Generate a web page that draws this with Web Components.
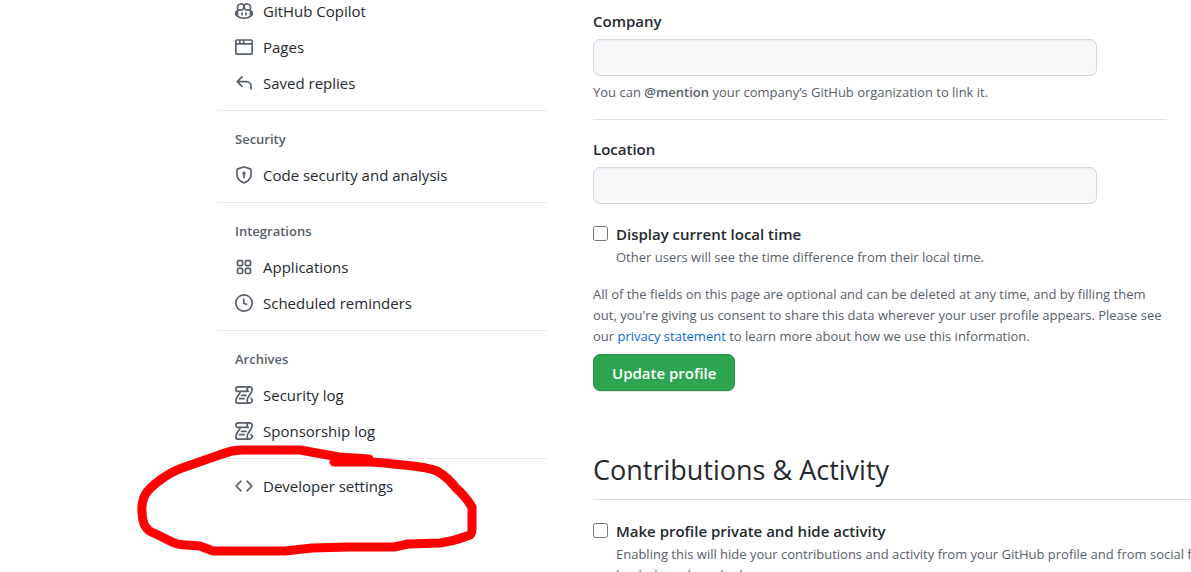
<!DOCTYPE html>
<html lang="en">
<head>
<meta charset="utf-8">
<title>Public profile</title>
<style>
html, body { margin: 0; height: 100%; overflow: hidden; }
body { background: #fff; color: #24292f; font: 15px/24px "Open Sans", "Noto Sans", sans-serif; }
</style>
</head>
<body>
<settings-page></settings-page>

<script>
const icons = {
  copilot: '<path d="M7.998 15.035c-4.562 0-7.873-2.914-7.998-3.749V9.338c.085-.628.677-1.686 1.588-2.065.013-.07.024-.143.036-.218.029-.183.06-.384.126-.612-.201-.508-.254-1.084-.254-1.656 0-.87.128-1.769.693-2.484.579-.733 1.494-1.124 2.724-1.261 1.206-.134 2.262.034 2.944.765.05.053.096.108.139.165.044-.057.094-.112.143-.165.682-.731 1.738-.899 2.944-.765 1.23.137 2.145.528 2.724 1.261.566.715.693 1.614.693 2.484 0 .572-.053 1.148-.254 1.656.066.228.098.429.126.612.012.076.024.148.037.218.924.385 1.522 1.471 1.591 2.095v1.872c0 .766-3.351 3.795-8.002 3.795Zm0-1.485c2.28 0 4.584-1.11 5.002-1.433V7.862l-.023-.116c-.49.21-1.075.291-1.727.291-1.146 0-2.059-.327-2.71-.991A3.222 3.222 0 0 1 8 6.303a3.24 3.24 0 0 1-.544.743c-.65.664-1.563.991-2.71.991-.652 0-1.236-.081-1.727-.291l-.023.116v4.255c.419.323 2.722 1.433 5.002 1.433ZM6.762 2.83c-.193-.206-.637-.413-1.682-.297-1.019.113-1.479.404-1.713.7-.247.312-.369.789-.369 1.554 0 .793.129 1.171.308 1.371.162.181.519.379 1.442.379.853 0 1.339-.235 1.638-.54.315-.322.527-.827.617-1.553.117-.935-.037-1.395-.241-1.614Zm4.155-.297c-1.044-.116-1.488.091-1.681.297-.204.219-.359.679-.242 1.614.091.726.303 1.231.618 1.553.299.305.784.54 1.638.54.922 0 1.28-.198 1.442-.379.179-.2.308-.578.308-1.371 0-.765-.123-1.242-.37-1.554-.233-.296-.693-.587-1.713-.7Z"/><path d="M6.25 9.037a.75.75 0 0 1 .75.75v1.501a.75.75 0 0 1-1.5 0V9.787a.75.75 0 0 1 .75-.75Zm4.25.75v1.501a.75.75 0 0 1-1.5 0V9.787a.75.75 0 0 1 1.5 0Z"/>',
  browser: '<path d="M0 2.75C0 1.784.784 1 1.75 1h12.5c.966 0 1.75.784 1.75 1.75v10.5A1.75 1.75 0 0 1 14.25 15H1.75A1.75 1.75 0 0 1 0 13.25ZM14.5 6h-13v7.25c0 .138.112.25.25.25h12.5a.25.25 0 0 0 .25-.25Zm-6-3.5v2h6V2.75a.25.25 0 0 0-.25-.25ZM5 2.5v2h2v-2Zm-3.25 0a.25.25 0 0 0-.25.25V4.5h2v-2Z"/>',
  reply: '<path d="M6.78 1.97a.75.75 0 0 1 0 1.06L3.81 6h6.44A4.75 4.75 0 0 1 15 10.75v2.5a.75.75 0 0 1-1.5 0v-2.5a3.25 3.25 0 0 0-3.25-3.25H3.81l2.97 2.97a.749.749 0 0 1-.326 1.275.749.749 0 0 1-.734-.215L1.47 7.28a.75.75 0 0 1 0-1.06l4.25-4.25a.75.75 0 0 1 1.06 0Z"/>',
  shield: '<path d="m8.533.133 5.25 1.68A1.75 1.75 0 0 1 15 3.48V7c0 1.566-.32 3.182-1.303 4.682-.983 1.498-2.585 2.813-5.032 3.855a1.697 1.697 0 0 1-1.33 0c-2.447-1.042-4.049-2.357-5.032-3.855C1.32 10.182 1 8.566 1 7V3.48a1.755 1.755 0 0 1 1.217-1.667l5.25-1.68a1.748 1.748 0 0 1 1.066 0Zm-.61 1.429.001.001-5.25 1.68a.251.251 0 0 0-.174.237V7c0 1.36.275 2.666 1.057 3.859.784 1.194 2.121 2.342 4.366 3.298a.196.196 0 0 0 .154 0c2.245-.957 3.582-2.103 4.366-3.297C13.225 9.666 13.5 8.358 13.5 7V3.48a.25.25 0 0 0-.174-.238l-5.25-1.68a.25.25 0 0 0-.153 0ZM9.5 6.5c0 .536-.286 1.032-.75 1.3v2.45a.75.75 0 0 1-1.5 0V7.8A1.5 1.5 0 1 1 9.5 6.5Z"/>',
  apps: '<path d="M1.5 3.25c0-.966.784-1.75 1.75-1.75h2.5c.966 0 1.75.784 1.75 1.75v2.5A1.75 1.75 0 0 1 5.75 7.5h-2.5A1.75 1.75 0 0 1 1.5 5.75ZM3.25 3a.25.25 0 0 0-.25.25v2.5c0 .138.112.25.25.25h2.5A.25.25 0 0 0 6 5.75v-2.5A.25.25 0 0 0 5.75 3ZM8.5 3.25c0-.966.784-1.75 1.75-1.75h2.5c.966 0 1.75.784 1.75 1.75v2.5a1.75 1.75 0 0 1-1.75 1.75h-2.5A1.75 1.75 0 0 1 8.500 5.75Zm1.75-.25a.25.25 0 0 0-.25.25v2.5c0 .138.112.25.25.25h2.5a.25.25 0 0 0 .25-.25v-2.5a.25.25 0 0 0-.25-.25ZM1.500 10.250c0-.966.784-1.75 1.750-1.750h2.500c.966 0 1.750.784 1.750 1.750v2.500a1.750 1.750 0 0 1-1.750 1.750h-2.500a1.750 1.750 0 0 1-1.750-1.750ZM3.250 10a.25.25 0 0 0-.25.25v2.500c0 .138.112.25.25.25h2.500a.25.25 0 0 0 .25-.25v-2.500a.25.25 0 0 0-.25-.25ZM8.500 10.250c0-.966.784-1.750 1.750-1.750h2.500c.966 0 1.750.784 1.750 1.750v2.500a1.750 1.750 0 0 1-1.750 1.750h-2.500a1.750 1.750 0 0 1-1.750-1.750Zm1.750-.25a.25.25 0 0 0-.25.25v2.500c0 .138.112.25.25.25h2.500a.25.25 0 0 0 .25-.25v-2.500a.25.25 0 0 0-.25-.25Z"/>',
  clock: '<path d="M8 0a8 8 0 1 1 0 16A8 8 0 0 1 8 0ZM1.5 8a6.5 6.5 0 1 0 13 0 6.5 6.5 0 0 0-13 0Zm7-3.25v2.992l2.028.812a.75.75 0 0 1-.557 1.392l-2.500-1A.751.751 0 0 1 7 8.250v-3.500a.75.75 0 0 1 1.500 0Z"/>',
  log: '<path d="M5 8.250a.75.75 0 0 1 .75-.75h4a.75.75 0 0 1 0 1.500h-4A.75.75 0 0 1 5 8.250ZM4 10.500A.75.75 0 0 0 4 12h4a.75.75 0 0 0 0-1.500H4Z"/><path d="M13-.005c1.654 0 3 1.328 3 3 0 .982-.338 1.933-.783 2.818-.443.879-1.028 1.758-1.582 2.588l-.011.017c-.568.853-1.104 1.659-1.501 2.446-.398.789-.623 1.494-.623 2.136a1.500 1.500 0 1 0 2.333-1.248.75.75 0 0 1 .834-1.246A3 3 0 0 1 13 16H3a3 3 0 0 1-3-3c0-1.582.891-3.135 1.777-4.506.209-.322.418-.637.623-.946.473-.709.923-1.386 1.287-2.048H2.510c-.576 0-1.381-.133-1.907-.783A2.680 2.680 0 0 1 0 2.995a3 3 0 0 1 3-3Zm0 1.500a1.500 1.500 0 0 0-1.500 1.500c0 .476.223.834.667 1.132A.75.75 0 0 1 11.750 5.500H5.368c-.467 1.003-1.141 2.015-1.773 2.963-.192.289-.381.571-.558.845C2.130 10.711 1.500 11.916 1.500 13A1.500 1.500 0 0 0 3 14.500h7.401A2.989 2.989 0 0 1 10 13c0-.979.338-1.928.784-2.812.441-.874 1.023-1.748 1.575-2.576l.017-.026c.568-.853 1.103-1.658 1.501-2.448.398-.79.623-1.497.623-2.143 0-.838-.669-1.500-1.500-1.500Zm-10 0a1.500 1.500 0 0 0-1.500 1.500c0 .321.100.569.270.778.097.120.325.227.740.227h7.674A2.737 2.737 0 0 1 10 2.995c0-.546.146-1.059.401-1.500Z"/>',
  code: '<path d="m11.280 3.220 4.250 4.250a.75.75 0 0 1 0 1.060l-4.250 4.250a.749.749 0 0 1-1.275-.326.749.749 0 0 1 .215-.734L13.940 8l-3.720-3.720a.749.749 0 0 1 .326-1.275.749.749 0 0 1 .734.215Zm-6.560 0a.751.751 0 0 1 1.042.018.751.751 0 0 1 .018 1.042L2.060 8l3.720 3.720a.749.749 0 0 1-.326 1.275.749.749 0 0 1-.734-.215L.470 8.530a.75.75 0 0 1 0-1.060Z"/>'
};

function define(name, html, setup) {
  customElements.define(name, class extends HTMLElement {
    constructor() {
      super();
      const template = document.createElement('template');
      template.innerHTML = html;
      this.attachShadow({ mode: 'open' }).append(template.content.cloneNode(true));
    }
    connectedCallback() {
      if (setup) setup(this, this.shadowRoot);
    }
  });
}

define('nav-item', `
<style>
:host { display: block; }
a { display: flex; align-items: center; gap: 10px; height: 36px; padding: 0 18px; color: inherit; text-decoration: none; }
svg { width: 18px; height: 18px; flex: none; fill: #57606a; }
</style>
<a href="#"><svg viewBox="0 0 16 16" aria-hidden="true"></svg><slot></slot></a>`,
(host, root) => { root.querySelector('svg').innerHTML = icons[host.getAttribute('icon')]; });

define('nav-group', `
<style>
:host { display: block; padding: 9px 0; border-top: 1px solid #e6e8eb; }
:host([first]) { border-top: 0; padding-top: 0; }
h3 { margin: 0; padding: 2px 18px 0; font-size: 13px; font-weight: 600; line-height: 35px; color: #57606a; }
h3:empty { display: none; }
</style>
<h3></h3><slot></slot>`,
(host, root) => { root.querySelector('h3').textContent = host.getAttribute('heading') || ''; });

define('text-field', `
<style>
:host { display: block; }
label { display: block; font-weight: 600; margin-bottom: 6px; }
input { display: block; box-sizing: border-box; width: 504px; max-width: 100%; height: 37px; padding: 6px 14px; border: 1px solid #d0d7de; border-radius: 7px; background: #f6f8fa; box-shadow: inset 0 1px 0 rgba(208,215,222,.2); font: inherit; color: inherit; }
::slotted(*) { display: block; margin-top: 6px; font-size: 13px; line-height: 21px; color: #57606a; }
</style>
<label for="field"></label><input id="field" type="text"><slot></slot>`,
(host, root) => { root.querySelector('label').textContent = host.getAttribute('label'); });

define('check-field', `
<style>
:host { display: grid; grid-template-columns: 15px 1fr; column-gap: 8px; row-gap: 1px; }
input { width: 15px; height: 15px; margin: 4px 0 0; }
label { font-weight: 600; }
.note { grid-column: 2; font-size: 13px; line-height: 21px; color: #57606a; }
</style>
<input id="box" type="checkbox"><label for="box"></label><div class="note"><slot></slot></div>`,
(host, root) => { root.querySelector('label').textContent = host.getAttribute('label'); });

define('primary-button', `
<style>
:host { display: block; }
button { height: 37px; padding: 0 18px; border: 1px solid #2a964a; border-radius: 7px; background: #2da44e; color: #fff; font: inherit; font-weight: 600; box-shadow: 0 1px 0 rgba(27,31,36,.1); }
</style>
<button type="button"><slot></slot></button>`);

define('marker-circle', `
<style>
:host { position: absolute; left: -87px; top: -19px; width: 350px; height: 120px; pointer-events: none; }
svg { display: block; width: 100%; height: 100%; }
</style>
<svg viewBox="130 440 350 120" fill="none" stroke="#f00" stroke-width="9" stroke-linecap="round" stroke-linejoin="round" aria-hidden="true">
<path d="M369 459 L339 457 L300 450 H242 Q232 450 222 454 L182 468 C168 473 150 486 145 495 C141 503 141 515 144 524 C147 530 150 532 156 534 L172 542 Q178 545 186 545 L200 546 L213 551 H285 L312 548 L348 547 H394 L408 544 L440 543 C455 541 462 538 470 535 Q472 533 472 530 V507 C467 499 463 494 456 488 C449 479 444 475 437 471 C425 466 410 466 385 463 L370 462 H334"/>
</svg>`);

define('settings-page', `
<style>
:host { display: grid; grid-template-columns: 330px minmax(0, 1fr); column-gap: 46px; padding-left: 217px; }
nav { margin-top: -7px; }
.marked { position: relative; display: block; }
main { padding-top: 9px; }
.profile { margin-right: 24px; }
hr { margin: 16px 0 17px; border: 0; border-top: 1px solid #d8dee4; }
check-field { margin-top: 18px; }
p { margin: 16px 0 7px; font-size: 13px; line-height: 21px; color: #57606a; }
p a { color: #0969da; text-decoration: none; }
b { font-weight: 600; }
h2 { margin: 58px 0 0; padding-bottom: 8px; border-bottom: 1px solid #d8dee4; font-size: 27px; font-weight: 400; line-height: 42px; }
.wide { margin-top: 19px; white-space: nowrap; }
</style>
<nav aria-label="Settings">
  <nav-group first>
    <nav-item icon="copilot">GitHub Copilot</nav-item>
    <nav-item icon="browser">Pages</nav-item>
    <nav-item icon="reply">Saved replies</nav-item>
  </nav-group>
  <nav-group heading="Security">
    <nav-item icon="shield">Code security and analysis</nav-item>
  </nav-group>
  <nav-group heading="Integrations">
    <nav-item icon="apps">Applications</nav-item>
    <nav-item icon="clock">Scheduled reminders</nav-item>
  </nav-group>
  <nav-group heading="Archives">
    <nav-item icon="log">Security log</nav-item>
    <nav-item icon="log">Sponsorship log</nav-item>
  </nav-group>
  <nav-group class="marked">
    <nav-item icon="code">Developer settings</nav-item>
    <marker-circle></marker-circle>
  </nav-group>
</nav>
<main>
  <section class="profile">
    <text-field label="Company"><span>You can <b>@mention</b> your company’s GitHub organization to link it.</span></text-field>
    <hr>
    <text-field label="Location"></text-field>
    <check-field label="Display current local time">Other users will see the time difference from their local time.</check-field>
    <p>All of the fields on this page are optional and can be deleted at any time, and by filling them out, you're giving us consent to share this data wherever your user profile appears. Please see our <a href="#">privacy statement</a> to learn more about how we use this information.</p>
    <primary-button>Update profile</primary-button>
  </section>
  <section>
    <h2>Contributions &amp; Activity</h2>
    <check-field class="wide" label="Make profile private and hide activity">Enabling this will hide your contributions and activity from your GitHub profile and from social features like followers, stars, feeds,<br>leaderboards and releases.</check-field>
  </section>
</main>`);
</script>
</body>
</html>
